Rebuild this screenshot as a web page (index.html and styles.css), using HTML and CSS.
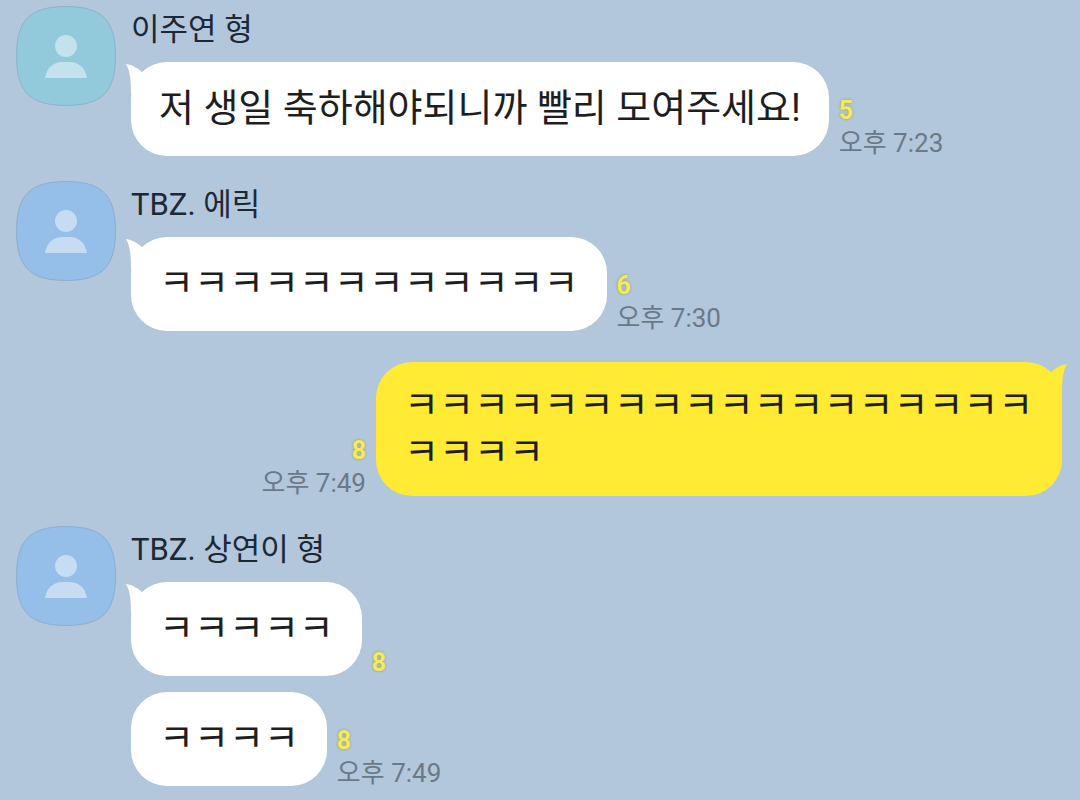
FILE: index.html
```html
<!DOCTYPE html>
<html lang="ko">
<head>
    <meta charset="UTF-8">
    <meta name="viewport" content="width=device-width, initial-scale=1.0">
    <title>채팅</title>
    <link rel="stylesheet" href="styles.css">
</head>
<body>
    <!-- Shapes shared by every message -->
    <svg class="sprite" aria-hidden="true">
        <symbol id="avatar" viewBox="0 0 100 100">
            <path class="avatar-bg" d="M50 .5C86 .5 99.5 14 99.5 50S86 99.5 50 99.5.5 86 .5 50 14 .5 50 .5Z"/>
            <circle class="avatar-person" cx="50" cy="40" r="11"/>
            <path class="avatar-person" d="M29 72C31 61 38 56 46 56H54C62 56 69 61 71 72Z"/>
        </symbol>
        <symbol id="tail" viewBox="0 0 18 32">
            <path d="M0 2C6 3 12 6 16 10L17 32H5C5 17 4 9 0 2Z"/>
        </symbol>
    </svg>

    <main class="chat">
        <section class="group">
            <svg class="avatar teal" aria-hidden="true"><use href="#avatar"/></svg>
            <div class="messages">
                <h2 class="name">이주연 형</h2>
                <div class="message">
                    <p class="bubble">
                        <svg class="tail" aria-hidden="true"><use href="#tail"/></svg>
                        저 생일 축하해야되니까 빨리 모여주세요!
                    </p>
                    <div class="meta">
                        <span class="unread">5</span>
                        <time class="time">오후 7:23</time>
                    </div>
                </div>
            </div>
        </section>

        <section class="group">
            <svg class="avatar" aria-hidden="true"><use href="#avatar"/></svg>
            <div class="messages">
                <h2 class="name">TBZ. 에릭</h2>
                <div class="message">
                    <p class="bubble">
                        <svg class="tail" aria-hidden="true"><use href="#tail"/></svg>
                        ㅋㅋㅋㅋㅋㅋㅋㅋㅋㅋㅋㅋ
                    </p>
                    <div class="meta">
                        <span class="unread">6</span>
                        <time class="time">오후 7:30</time>
                    </div>
                </div>
            </div>
        </section>

        <section class="group mine">
            <div class="message">
                <p class="bubble">
                    <svg class="tail" aria-hidden="true"><use href="#tail"/></svg>
                    ㅋㅋㅋㅋㅋㅋㅋㅋㅋㅋㅋㅋㅋㅋㅋㅋㅋㅋㅋㅋㅋㅋ
                </p>
                <div class="meta">
                    <span class="unread">8</span>
                    <time class="time">오후 7:49</time>
                </div>
            </div>
        </section>

        <section class="group">
            <svg class="avatar" aria-hidden="true"><use href="#avatar"/></svg>
            <div class="messages">
                <h2 class="name">TBZ. 상연이 형</h2>
                <div class="message">
                    <p class="bubble">
                        <svg class="tail" aria-hidden="true"><use href="#tail"/></svg>
                        ㅋㅋㅋㅋㅋ
                    </p>
                    <div class="meta">
                        <span class="unread">8</span>
                    </div>
                </div>
                <div class="message">
                    <p class="bubble">ㅋㅋㅋㅋ</p>
                    <div class="meta">
                        <span class="unread">8</span>
                        <time class="time">오후 7:49</time>
                    </div>
                </div>
            </div>
        </section>
    </main>
</body>
</html>
```
FILE: styles.css
```css
* {
    box-sizing: border-box;
}
body {
    margin: 0;
    background-color: #b2c7db;
    font-family: Roboto, "Noto Sans CJK KR", sans-serif;
    color: #1e1e1e;
}
.sprite {
    display: none;
}
.chat {
    padding: 6px 18px 14px 16px;
}
.group {
    display: flex;
    gap: 15px;
    margin-bottom: 25px;
}
.group:last-child {
    margin-bottom: 0;
}

/* Avatar */
.avatar {
    flex: none;
    width: 100px;
    height: 100px;
    color: #95bfe8;
}
.avatar.teal {
    color: #92cadc;
}
.avatar-bg {
    fill: currentColor;
    stroke: rgba(70, 110, 160, 0.25);
}
.avatar-person {
    fill: rgba(255, 255, 255, 0.45);
}

/* Messages */
.name {
    margin: 0 0 8px;
    font-size: 31px;
    font-weight: normal;
    line-height: 48px;
    color: #1b2936;
}
.message {
    display: flex;
    align-items: flex-end;
    gap: 10px;
}
.message + .message {
    margin-top: 16px;
}
.bubble {
    position: relative;
    margin: 0;
    padding: 23px 28px 24px;
    border-radius: 36px;
    background-color: #fff;
    font-size: 38px;
    line-height: 47px;
    word-break: break-all;
}
.tail {
    position: absolute;
    top: 0;
    left: -5px;
    width: 18px;
    height: 32px;
    fill: #fff;
}
.meta {
    flex: none;
    display: flex;
    flex-direction: column;
    gap: 6px;
    line-height: 26px;
}
.unread {
    font-size: 25px;
    font-weight: bold;
    color: #f3ea62;
    text-shadow: 0 0 3px #a39b3c;
}
.time {
    font-size: 26px;
    color: #6a798a;
}

/* Own messages sit on the right */
.mine {
    justify-content: flex-end;
    margin: 31px 0 30px;
}
.mine .message {
    flex-direction: row-reverse;
}
.mine .bubble {
    max-width: 686px;
    padding: 20px 28px;
    background-color: #ffeb33;
}
.mine .tail {
    left: auto;
    right: -5px;
    fill: #ffeb33;
    transform: scaleX(-1);
}
.mine .meta {
    align-items: flex-end;
}
```
